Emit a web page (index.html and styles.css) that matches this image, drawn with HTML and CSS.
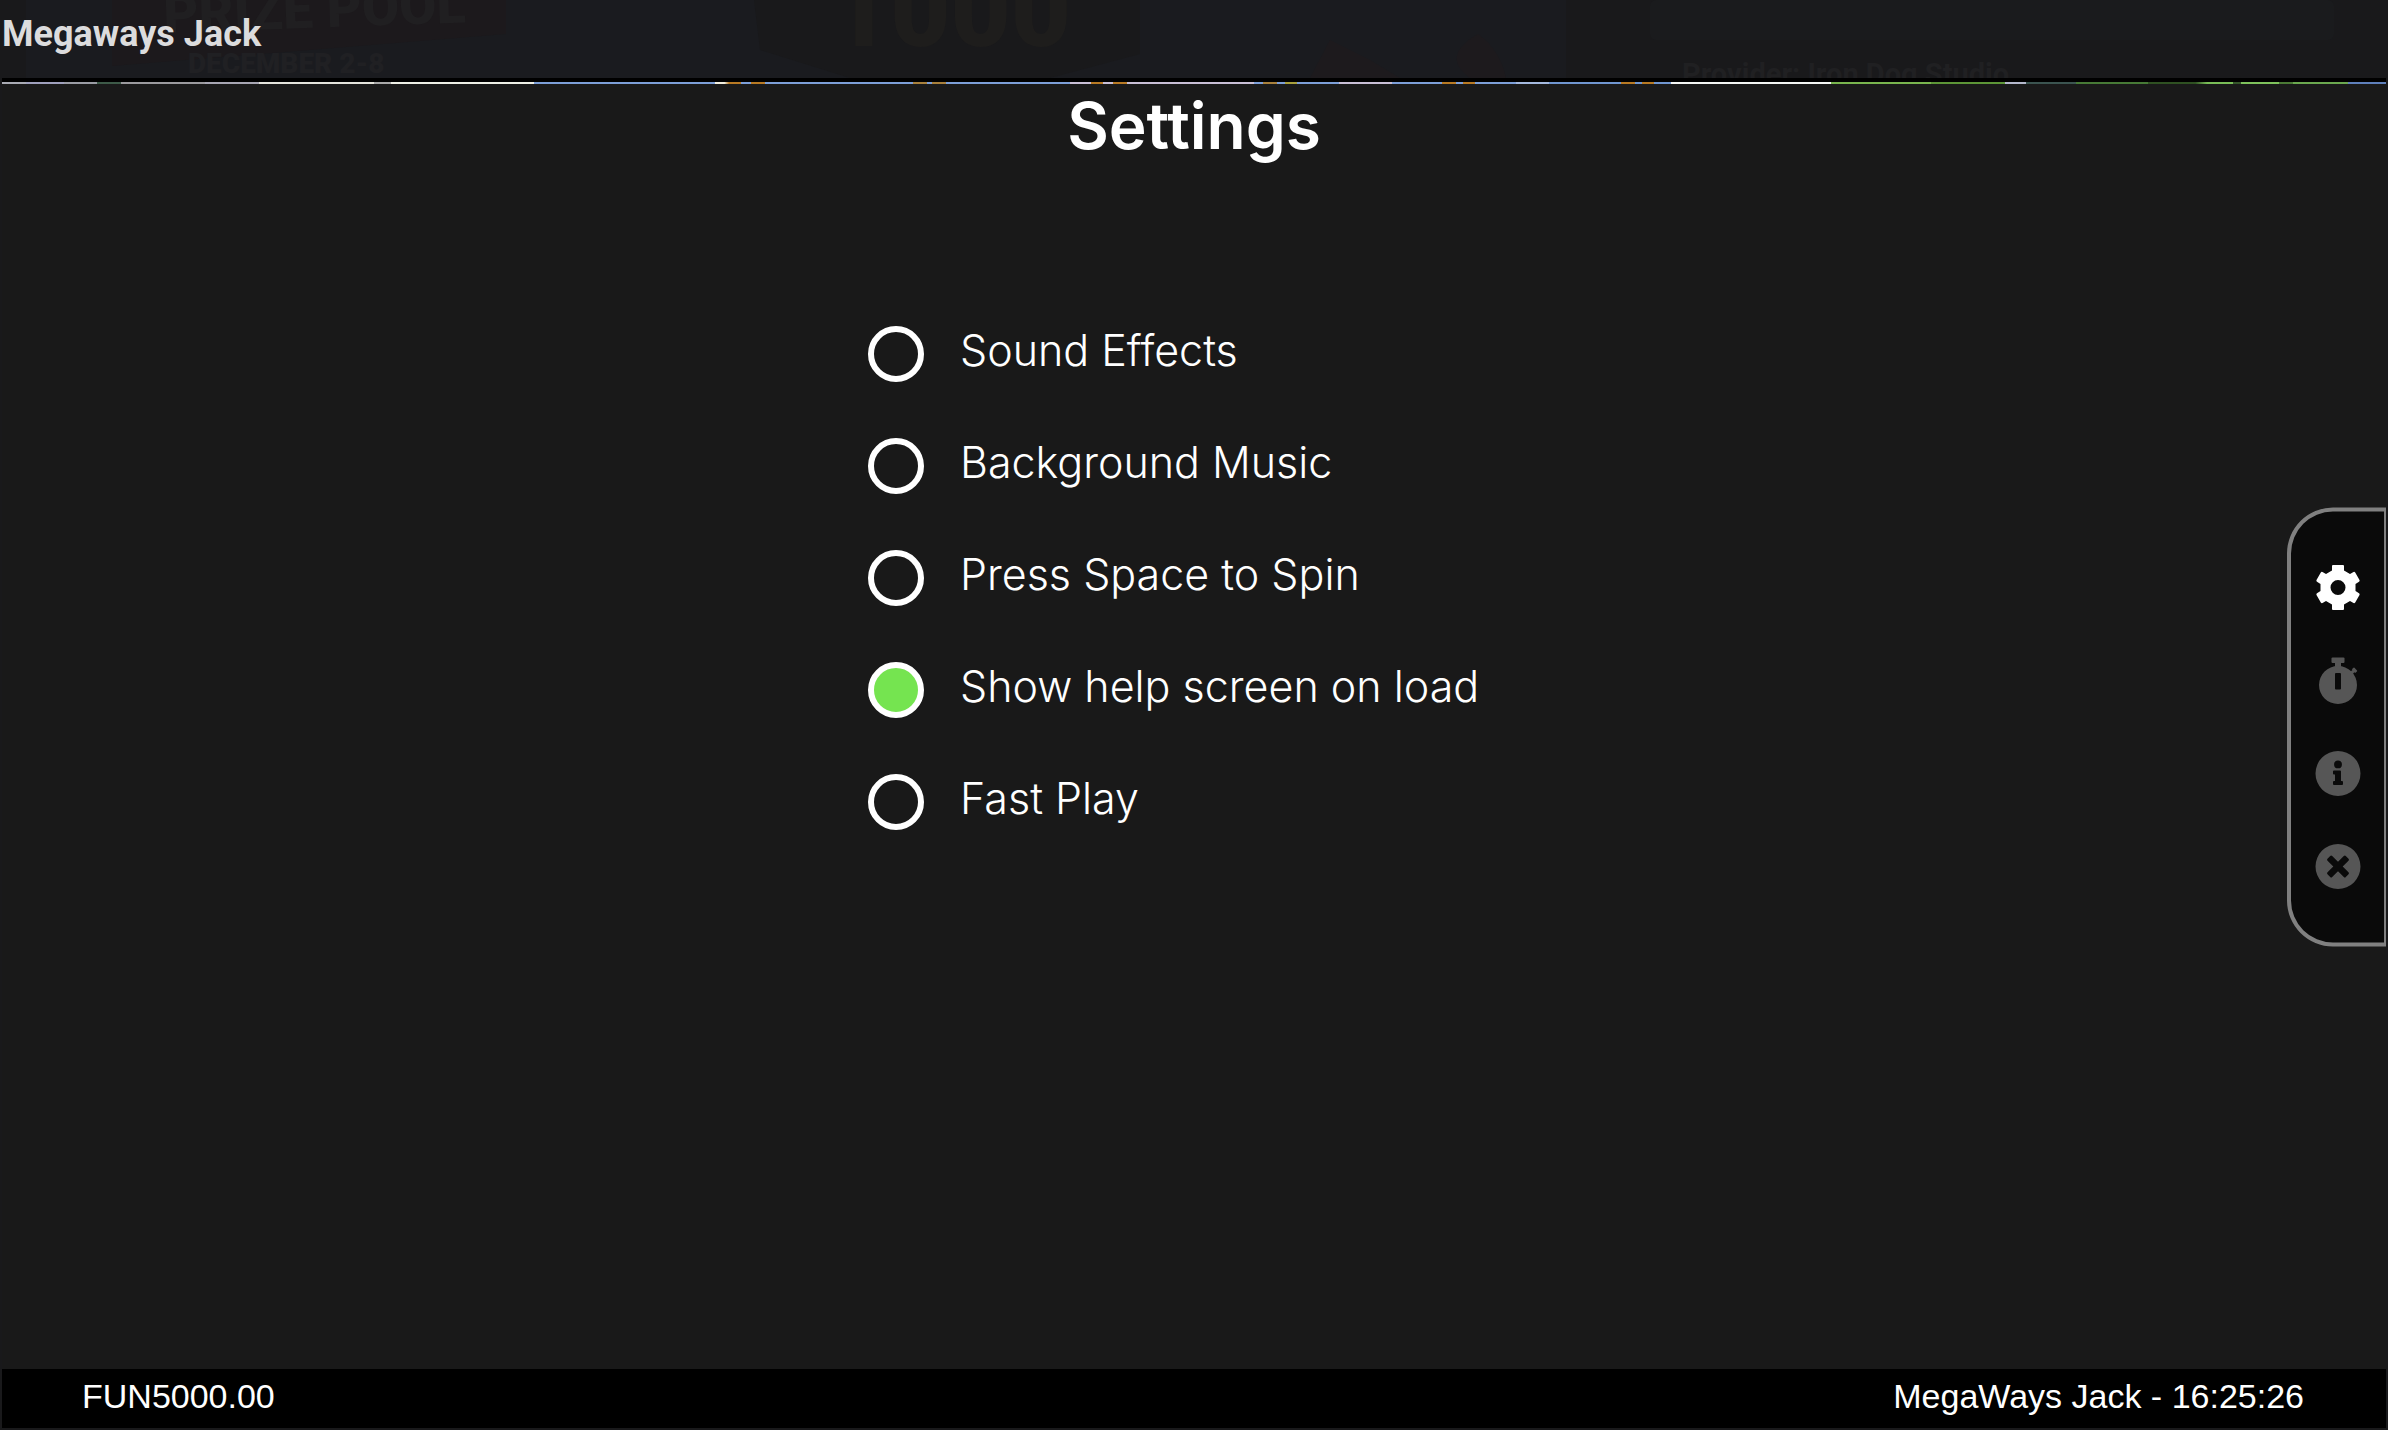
FILE: index.html
```html
<!DOCTYPE html>
<html lang="en">
<head>
    <meta charset="UTF-8">
    <meta name="viewport" content="width=device-width, initial-scale=1.0">
    <title>Megaways Jack</title>
    <link rel="stylesheet" href="styles.css">
</head>
<body>
    <header class="topbar">
        <!-- lobby page showing faintly through the bar -->
        <svg class="backdrop" viewBox="0 0 2388 78" preserveAspectRatio="xMinYMin slice" aria-hidden="true">
            <rect x="26" width="1540" height="78" fill="#1a1b1f"/>
            <path d="M112 0H506V34L112 66Z" fill="#1c191c"/>
            <path d="M754 0H1140V54L1050 78H850L760 50Z" fill="#19191b"/>
            <rect x="1650" width="684" height="40" rx="6" fill="#1a1b1d"/>
            <g font-family="Roboto, sans-serif" font-weight="900">
                <text x="164" y="33" font-size="54" fill="#201f21" transform="rotate(-2 164 33)">PRIZE POOL</text>
                <text x="188" y="73" font-size="28" fill="#202023">DECEMBER 2-8</text>
                <text x="830" y="46" font-size="104" fill="#1e1d1c">1000</text>
            </g>
            <path d="M1470 78Q1440 56 1478 34Q1500 50 1506 78M1310 78L1330 40L1370 60L1400 78Z" fill="#1d1a1d"/>
            <text x="1682" y="84" font-family="Roboto, sans-serif" font-weight="700" font-size="29" fill="#202022">Provider: Iron Dog Studio</text>
        </svg>
        <span class="game-name">Megaways Jack</span>
    </header>

    <div class="game">
        <div class="reel-edge"></div>

        <main class="settings">
            <h1>Settings</h1>
            <form class="options">
                <label class="option"><input type="checkbox" name="sound"><span>Sound Effects</span></label>
                <label class="option"><input type="checkbox" name="music"><span>Background Music</span></label>
                <label class="option"><input type="checkbox" name="space"><span>Press Space to Spin</span></label>
                <label class="option"><input type="checkbox" name="help" checked><span>Show help screen on load</span></label>
                <label class="option"><input type="checkbox" name="fast"><span>Fast Play</span></label>
            </form>

            <nav class="side-menu">
                <button type="button" class="active" aria-label="Settings">
                    <svg viewBox="0 0 46 46">
                        <path fill-rule="evenodd" d="M18 .5H28Q29 .5 29 1.500V6L35 9.500L38.500 7.500Q39.500 7 40.200 8L44.500 15.500Q45 16.500 44 17.200L40.500 19.500V26.500L44 28.800Q45 29.500 44.500 30.500L40.200 38Q39.500 39 38.500 38.500L35 36.500L29 40V44.500Q29 45.500 28 45.500H18Q17 45.500 17 44.500V40L11 36.500L7.500 38.500Q6.500 39 5.800 38L1.500 30.500Q1 29.500 2 28.800L5.500 26.500V19.500L2 17.200Q1 16.500 1.500 15.500L5.800 8Q6.500 7 7.500 7.500L11 9.500L17 6V1.500Q17 .5 18 .5ZM23 15.500A7.500 7.500 0 1 0 23 30.500A7.500 7.500 0 1 0 23 15.500Z"/>
                    </svg>
                </button>
                <button type="button" aria-label="Session timer">
                    <svg viewBox="0 0 46 46">
                        <rect x="16.500" width="13" height="5.500" rx="1"/>
                        <rect x="20" y="4" width="6" height="7"/>
                        <path d="M33.500 15.500L37.500 12.500L36.800 11.700L38.500 10.200Q39 9.800 39.500 10.300L42 13Q42.400 13.500 41.900 14L40.200 15.500L39.300 14.700L36 18.500Z"/>
                        <path fill-rule="evenodd" d="M23 8.500A19 19 0 1 1 23 46.500A19 19 0 1 1 23 8.500ZM21 15.500Q20 15.500 20 16.500V31Q20 32 21 32H25Q26 32 26 31V16.500Q26 15.500 25 15.500Z"/>
                    </svg>
                </button>
                <button type="button" aria-label="Information">
                    <svg viewBox="0 0 46 46">
                        <path fill-rule="evenodd" d="M23 .5A22.500 22.500 0 1 1 23 45.500A22.500 22.500 0 1 1 23 .5ZM23 10A3.900 3.900 0 1 0 23 17.800A3.900 3.900 0 1 0 23 10ZM19 20Q18 20 18 21V23Q18 24 19 24H20V30.500H19Q18 30.500 18 31.500V33.500Q18 34.500 19 34.500H27Q28 34.500 28 33.500V31.500Q28 30.500 27 30.500H26V21Q26 20 25 20Z"/>
                    </svg>
                </button>
                <button type="button" aria-label="Close">
                    <svg viewBox="0 0 46 46">
                        <path fill-rule="evenodd" d="M23 .5A22.500 22.500 0 1 1 23 45.500A22.500 22.500 0 1 1 23 .5ZM23 18.300L17.200 12.500Q16.200 11.500 15.200 12.500L12.500 15.200Q11.500 16.200 12.500 17.200L18.300 23L12.500 28.800Q11.500 29.800 12.500 30.800L15.200 33.500Q16.200 34.500 17.200 33.500L23 27.700L28.800 33.500Q29.800 34.500 30.800 33.500L33.500 30.800Q34.500 29.800 33.500 28.800L27.700 23L33.500 17.200Q34.500 16.200 33.500 15.200L30.800 12.500Q29.800 11.500 28.800 12.500Z"/>
                    </svg>
                </button>
            </nav>
        </main>

        <footer class="statusbar">
            <span>FUN5000.00</span>
            <span>MegaWays Jack - 16:25:26</span>
        </footer>
    </div>
</body>
</html>
```

FILE: styles.css
```css
* {
    box-sizing: border-box;
}
body {
    margin: 0;
    min-height: 100vh;
    display: flex;
    flex-direction: column;
    background: #19191b;
    color: #fff;
}

/* top bar */
.topbar {
    position: relative;
    height: 78px;
    padding: 13px 2px;
    overflow: hidden;
}
.backdrop {
    position: absolute;
    top: 0;
    left: 0;
    width: 100%;
    height: 100%;
}
.game-name {
    position: relative;
    font: 700 36px/42px Roboto, sans-serif;
    color: #dcdcdd;
}

/* game frame */
.game {
    flex: 1;
    display: flex;
    flex-direction: column;
    margin: 0 2px 2px;
    border-top: 4px solid #000;
}
.reel-edge {
    height: 2px;
    background: linear-gradient(90deg,
        #a9abb4 0 1%, #9fa0bd 1% 2.6%, #9a9ca4 2.6% 4%, #3d5a48 4% 5%,
        #9b9a9e 5% 8.5%, #a7a6b3 8.5% 10.8%, #e4e4dc 10.8% 15.6%,
        #a9a9a9 15.6% 16.3%, #eef0e6 16.3% 22.3%, #7d9fd8 22.3% 29.9%,
        #f2efe0 29.9% 30.3%, #b87a24 30.5% 31%, #7d9fd8 31% 31.4%, #b87a24 31.4% 32%,
        #7d9fd8 32% 38.2%, #a8803c 38.2% 38.8%, #7d9fd8 38.8% 39%, #a8803c 39% 39.6%,
        #7d9fd8 39.6% 44.8%, #c9bfd6 44.8% 45.7%, #b87a24 45.7% 46.2%, #c9bfd6 46.2% 46.6%,
        #b87a24 46.6% 47.2%, #c9bfd6 47.2% 52.5%, #7d9fd8 52.5% 52.9%, #a8803c 52.9% 53.5%,
        #7d9fd8 53.5% 53.8%, #a8a03c 53.8% 54.3%, #7d9fd8 54.3% 56.1%, #c9bfd6 56.1% 58.3%,
        #7d9fd8 58.3% 60.4%, #b87a24 60.4% 61%, #7d9fd8 61% 61.3%, #b87a24 61.3% 61.8%,
        #7d9fd8 61.8% 63.5%, #a4b9de 63.5% 64.9%, #7096d0 64.9% 67.9%, #b87a24 67.9% 68.5%,
        #7096d0 68.5% 68.8%, #b87a24 68.8% 69.3%, #7096d0 69.3% 70%, #f4f6f4 70% 76.7%,
        #79b54e 76.7% 80.9%, #5d9637 80.9% 84%, #b4b8cc 84% 84.9%, #3b5450 84.9% 87%,
        #477a36 87% 90%, #2f5122 90% 92%, #79bd57 92.5% 93.6%, #35562a 93.6% 93.9%,
        #7fc25c 93.9% 95.5%, #4b7a35 95.5% 96.1%, #6ba84f 96.1% 98.4%, #5f80bb 98.4%);
}

/* settings */
.settings {
    position: relative;
    flex: 1;
    display: flex;
    flex-direction: column;
    align-items: center;
    background: #191919;
}
.settings h1 {
    margin: 0;
    font: 600 64px/84px Inter, sans-serif;
}
.options {
    width: 652px;
    margin-top: 130px;
    display: flex;
    flex-direction: column;
}
.option {
    display: flex;
    align-items: center;
    gap: 36px;
    height: 112px;
    font: 300 43px/50px Inter, sans-serif;
    cursor: pointer;
}
.option span {
    padding-bottom: 8px;
}
.option input {
    appearance: none;
    width: 56px;
    height: 56px;
    margin: 0;
    border: 6px solid #fff;
    border-radius: 50%;
    cursor: pointer;
}
.option input:checked {
    background: #75e450;
}

/* side menu */
.side-menu {
    position: absolute;
    top: 50%;
    right: 0;
    transform: translateY(-50%);
    display: flex;
    flex-direction: column;
    gap: 47px;
    padding: 53px 23px 53px 24px;
    background: #0a0a0a;
    border: 4px solid #808080;
    border-right-width: 2px;
    border-radius: 46px 0 0 46px;
}
.side-menu button {
    display: block;
    width: 46px;
    height: 46px;
    padding: 0;
    border: 0;
    background: none;
    color: #565656;
    cursor: pointer;
}
.side-menu button.active {
    color: #fff;
}
.side-menu svg {
    display: block;
    overflow: visible;
    fill: currentColor;
}

/* status bar */
.statusbar {
    display: flex;
    justify-content: space-between;
    padding: 7px 82px 6px 80px;
    height: 59px;
    background: #000;
    font: 34px/40px "Liberation Sans", Arial, sans-serif;
}
```
